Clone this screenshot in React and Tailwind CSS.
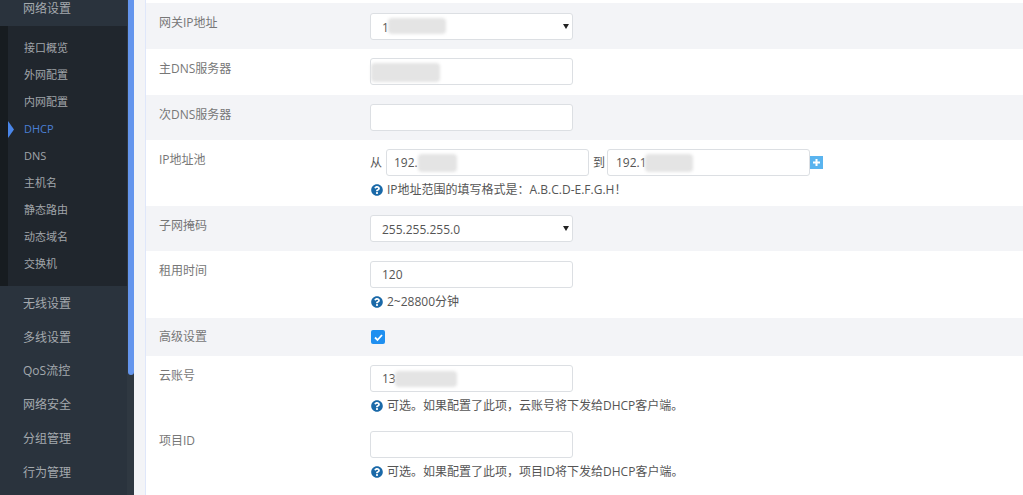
import { FaQuestionCircle } from "react-icons/fa";

const subItems = ["接口概览", "外网配置", "内网配置", "DHCP", "DNS", "主机名", "静态路由", "动态域名", "交换机"];
const mainItems = ["无线设置", "多线设置", "QoS流控", "网络安全", "分组管理", "行为管理"];

const boxCls = "w-full h-[27px] rounded-[3px] border border-[#dcdfe3] bg-white text-[12px] text-[#555] outline-none";
const inputCls = boxCls + " px-[11px]";

function Patch({ className }) {
  return <div className={"absolute rounded-sm bg-[#e4e4e4] blur-[1.500px] " + className}></div>;
}

function Hint({ children }) {
  return (
    <div className="mt-[6px] flex h-[16px] items-center gap-[4px] pl-px text-[12px] text-[#555]">
      <FaQuestionCircle className="h-[12px] w-[12px] text-[#1a69a8]" />
      <span>{children}</span>
    </div>
  );
}

function Field({ value, patch }) {
  return (
    <div className="relative w-[203px]">
      <input readOnly value={value || ""} className={inputCls} />
      {patch}
    </div>
  );
}

function Dropdown({ value, patch }) {
  return (
    <div className="relative w-[203px]">
      <select value={value} onChange={() => {}} className={inputCls + " appearance-none pt-[2px]"}>
        <option>{value}</option>
      </select>
      <svg className="absolute right-[4px] top-[11px] h-[5px] w-[6px]" viewBox="0 0 6 5">
        <path d="M0 0h6L3 5z" fill="#222" />
      </svg>
      {patch}
    </div>
  );
}

function Row({ label, className, labelClass, children }) {
  return (
    <div className={"grid grid-cols-[211px_1fr] pl-[13px] " + className}>
      <div className={"text-[12px] leading-[16px] text-[#777] " + labelClass}>{label}</div>
      <div>{children}</div>
    </div>
  );
}

export default function App() {
  return (
    <div
      className="flex h-screen overflow-hidden bg-white"
      style={{ fontFamily: '"Open Sans", "Noto Sans CJK SC", sans-serif' }}
    >
      {/* left menu */}
      <div className="w-[127px] shrink-0 bg-[#2a333d]">
        <div className="-mt-[8px] flex h-[34px] items-center pl-[23px] text-[12px] text-[#a4a9ae]">网络设置</div>
        <div className="flex bg-[#20262d]">
          <div className="w-[8px] bg-[#171c20]"></div>
          <div className="relative flex-1 pt-[9px] pb-[8px]">
            <svg className="absolute left-0 top-[95px] h-[17px] w-[6px]" viewBox="0 0 6 17">
              <path d="M0 0l6 8.500-6 8.500z" fill="#4a86e8" />
            </svg>
            {subItems.map((item) => (
              <div
                key={item}
                className={
                  item === "DHCP"
                    ? "flex h-[27px] items-center pl-[16px] text-[11px] font-medium text-[#4a7fd6]"
                    : "flex h-[27px] items-center pl-[16px] text-[11px] text-[#a0a5aa]"
                }
              >
                {item}
              </div>
            ))}
          </div>
        </div>
        <div className="pt-px">
          {mainItems.map((item) => (
            <div key={item} className="flex h-[33.800px] items-center pl-[23px] text-[12px] text-[#a4a9ae]">
              {item}
            </div>
          ))}
        </div>
      </div>

      {/* scrollbar */}
      <div className="w-[7px] shrink-0 bg-[#2f3841]">
        <div className="ml-px h-[375px] w-[6px] rounded-b-[3px] bg-[#6495ed]"></div>
      </div>

      {/* gutter */}
      <div className="w-[11px] shrink-0 bg-[#f3f4f7]"></div>
      <div className="w-px shrink-0 bg-[#dfe7fa]"></div>

      {/* form */}
      <div className="min-w-0 flex-1 pt-[3px]">
        <Row label="网关IP地址" className="h-[46px] bg-[#f3f4f7] pt-[10px]" labelClass="pt-[2px]">
          <Dropdown value="1" patch={<Patch className="left-[18px] top-[5px] h-[16px] w-[58px]" />} />
        </Row>
        <Row label="主DNS服务器" className="h-[46px] pt-[9px]" labelClass="pt-[3px]">
          <Field patch={<Patch className="left-[1px] top-[5px] h-[19px] w-[69px]" />} />
        </Row>
        <Row label="次DNS服务器" className="h-[45px] bg-[#f3f4f7] pt-[9px]" labelClass="pt-[3px]">
          <Field />
        </Row>
        <Row label="IP地址池" className="h-[66px] pt-[9px]" labelClass="pt-[3px]">
          <div className="flex h-[27px] items-center text-[12px] text-[#555]">
            <span className="w-[16px]">从</span>
            <div className="relative w-[203px]">
              <input readOnly value="192." className={boxCls + " px-[7px]"} />
              <Patch className="left-[32px] top-[5px] h-[18px] w-[39px]" />
            </div>
            <span className="w-[18px] pl-[4px]">到</span>
            <div className="relative w-[203px]">
              <input readOnly value="192.1" className={boxCls + " px-[8px]"} />
              <Patch className="left-[38px] top-[5px] h-[18px] w-[48px]" />
            </div>
            <div className="flex h-[13px] w-[13px] items-center justify-center bg-[#5ab4ef]">
              <svg className="h-[7px] w-[7px]" viewBox="0 0 7 7">
                <path d="M3.500 0v7M0 3.500h7" stroke="#fff" strokeWidth="2" />
              </svg>
            </div>
          </div>
          <Hint>IP地址范围的填写格式是：A.B.C.D-E.F.G.H！</Hint>
        </Row>
        <Row label="子网掩码" className="h-[45px] bg-[#f3f4f7] pt-[9px]" labelClass="pt-[3px]">
          <Dropdown value="255.255.255.0" />
        </Row>
        <Row label="租用时间" className="h-[67px] pt-[10px]" labelClass="pt-[2px]">
          <Field value="120" />
          <Hint>2~28800分钟</Hint>
        </Row>
        <Row label="高级设置" className="h-[38px] items-center bg-[#f3f4f7]">
          <div className="ml-px flex h-[14px] w-[14px] items-center justify-center rounded-[2px] bg-[#1f8ff0]">
            <svg className="h-[9px] w-[9px]" viewBox="0 0 9 9" fill="none">
              <path d="M1 4.500l2.500 2.500L8 2" stroke="#fff" strokeWidth="1.800" />
            </svg>
          </div>
        </Row>
        <Row label="云账号" className="h-[67px] pt-[9px]" labelClass="pt-[3px]">
          <Field value="13" patch={<Patch className="left-[25px] top-[6px] h-[16px] w-[62px]" />} />
          <Hint>可选。如果配置了此项，云账号将下发给DHCP客户端。</Hint>
        </Row>
        <Row label="项目ID" className="h-[67px] pt-[8px]" labelClass="pt-[2px]">
          <Field />
          <Hint>可选。如果配置了此项，项目ID将下发给DHCP客户端。</Hint>
        </Row>
      </div>
    </div>
  );
}
